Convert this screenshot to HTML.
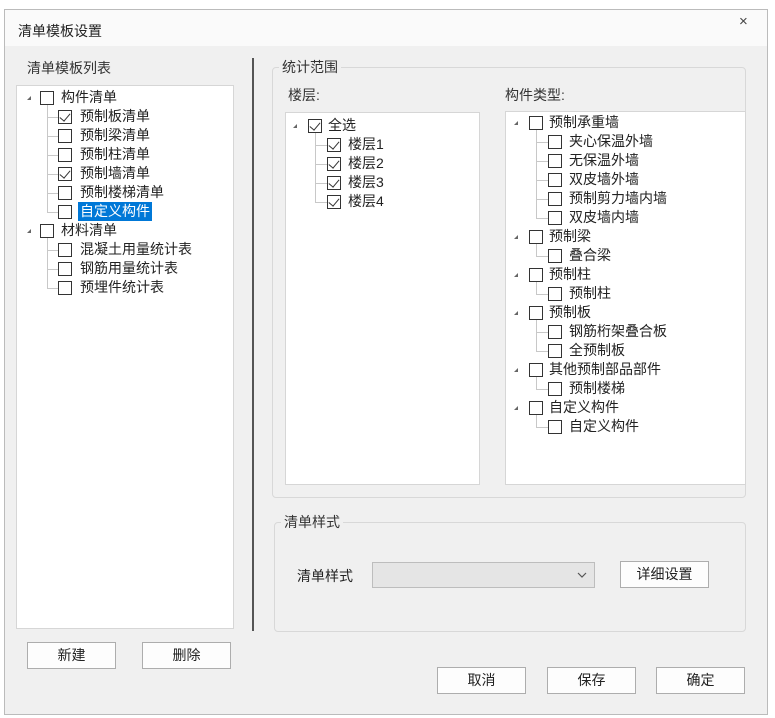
<!DOCTYPE html>
<html><head><meta charset="utf-8"><style>
*{margin:0;padding:0;box-sizing:border-box}
body{width:775px;height:718px;background:#fff;position:relative;overflow:hidden;font-family:"Liberation Sans","Noto Sans CJK SC",sans-serif;font-size:14px;color:#222}
.a{position:absolute}
.win{left:4px;top:9px;width:764px;height:706px;border:1px solid #bbb;background:#f0f0f0}
.tb{left:5px;top:10px;width:762px;height:36px;background:#fafafa}
.box{position:absolute;background:#fff;border:1px solid #d6d6d6}
.grp{position:absolute;border:1px solid #d8d8d8;border-radius:4px}
.lg{position:absolute;background:#f0f0f0;padding:0 3px;color:#333;line-height:16px}
.btn{position:absolute;background:#fdfdfd;border:1px solid #adadad;text-align:center;line-height:25px;color:#222}
.r{position:absolute;height:19px;line-height:19px;white-space:nowrap}
.cb{position:absolute;width:14px;height:14px;border:1px solid #333;background:#fff}
.ck::after{content:"";position:absolute;left:3px;top:0px;width:5px;height:9px;border-right:1.5px solid #333;border-bottom:1.5px solid #333;transform:rotate(40deg)}
.ar{position:absolute;width:0;height:0;border-left:4px solid transparent;border-bottom:4px solid #666}
.vl{position:absolute;width:1px;background:#c8c8c8}
.hl{position:absolute;height:1px;background:#c8c8c8}
</style></head><body>
<div class="a win"></div>
<div class="a tb"></div>
<div class="a" style="left:18px;top:22px;line-height:18px;color:#222">清单模板设置</div>
<div class="a" style="left:739px;top:13px;font-size:15px;color:#444">×</div>

<div class="a" style="left:27px;top:58px;color:#333">清单模板列表</div>
<div class="box" style="left:16px;top:85px;width:218px;height:544px"></div>
<div class="a" style="left:252px;top:58px;width:2px;height:573px;background:#555"></div>

<!-- left tree -->
<div class="ar" style="left:27px;top:96px"></div>
<div class="cb" style="left:40px;top:91px"></div><div class="r" style="left:61px;top:88px">构件清单</div>
<div class="vl" style="left:47px;top:105px;height:108px"></div>
<div class="hl" style="left:47px;top:117px;width:11px"></div>
<div class="hl" style="left:47px;top:136px;width:11px"></div>
<div class="hl" style="left:47px;top:155px;width:11px"></div>
<div class="hl" style="left:47px;top:174px;width:11px"></div>
<div class="hl" style="left:47px;top:193px;width:11px"></div>
<div class="hl" style="left:47px;top:212px;width:11px"></div>
<div class="cb ck" style="left:58px;top:110px"></div><div class="r" style="left:80px;top:107px">预制板清单</div>
<div class="cb" style="left:58px;top:129px"></div><div class="r" style="left:80px;top:126px">预制梁清单</div>
<div class="cb" style="left:58px;top:148px"></div><div class="r" style="left:80px;top:145px">预制柱清单</div>
<div class="cb ck" style="left:58px;top:167px"></div><div class="r" style="left:80px;top:164px">预制墙清单</div>
<div class="cb" style="left:58px;top:186px"></div><div class="r" style="left:80px;top:183px">预制楼梯清单</div>
<div class="cb" style="left:58px;top:205px"></div><div class="r" style="left:78px;top:202px;background:#0078d7;color:#fff;padding:0 2px">自定义构件</div>
<div class="ar" style="left:27px;top:229px"></div>
<div class="cb" style="left:40px;top:224px"></div><div class="r" style="left:61px;top:221px">材料清单</div>
<div class="vl" style="left:47px;top:238px;height:51px"></div>
<div class="hl" style="left:47px;top:250px;width:11px"></div>
<div class="hl" style="left:47px;top:269px;width:11px"></div>
<div class="hl" style="left:47px;top:288px;width:11px"></div>
<div class="cb" style="left:58px;top:243px"></div><div class="r" style="left:80px;top:240px">混凝土用量统计表</div>
<div class="cb" style="left:58px;top:262px"></div><div class="r" style="left:80px;top:259px">钢筋用量统计表</div>
<div class="cb" style="left:58px;top:281px"></div><div class="r" style="left:80px;top:278px">预埋件统计表</div>

<div class="btn" style="left:27px;top:642px;width:89px;height:27px">新建</div>
<div class="btn" style="left:142px;top:642px;width:89px;height:27px">删除</div>

<!-- group 1 -->
<div class="grp" style="left:272px;top:67px;width:474px;height:431px"></div>
<div class="lg" style="left:279px;top:59px">统计范围</div>
<div class="a" style="left:288px;top:85px;color:#333">楼层:</div>
<div class="a" style="left:505px;top:85px;color:#333">构件类型:</div>
<div class="box" style="left:285px;top:112px;width:195px;height:373px"></div>
<div class="box" style="left:505px;top:111px;width:241px;height:374px"></div>

<div class="ar" style="left:293px;top:124px"></div>
<div class="cb ck" style="left:308px;top:119px"></div><div class="r" style="left:328px;top:116px">全选</div>
<div class="vl" style="left:315px;top:133px;height:70px"></div>
<div class="hl" style="left:315px;top:145px;width:12px"></div>
<div class="hl" style="left:315px;top:164px;width:12px"></div>
<div class="hl" style="left:315px;top:183px;width:12px"></div>
<div class="hl" style="left:315px;top:202px;width:12px"></div>
<div class="cb ck" style="left:327px;top:138px"></div><div class="r" style="left:348px;top:135px">楼层1</div>
<div class="cb ck" style="left:327px;top:157px"></div><div class="r" style="left:348px;top:154px">楼层2</div>
<div class="cb ck" style="left:327px;top:176px"></div><div class="r" style="left:348px;top:173px">楼层3</div>
<div class="cb ck" style="left:327px;top:195px"></div><div class="r" style="left:348px;top:192px">楼层4</div>

<!-- type tree -->
<div class="ar" style="left:514px;top:121px"></div>
<div class="cb" style="left:529px;top:116px"></div><div class="r" style="left:549px;top:113px">预制承重墙</div>
<div class="vl" style="left:536px;top:130px;height:89px"></div>
<div class="hl" style="left:536px;top:142px;width:12px"></div>
<div class="hl" style="left:536px;top:161px;width:12px"></div>
<div class="hl" style="left:536px;top:180px;width:12px"></div>
<div class="hl" style="left:536px;top:199px;width:12px"></div>
<div class="hl" style="left:536px;top:218px;width:12px"></div>
<div class="cb" style="left:548px;top:135px"></div><div class="r" style="left:569px;top:132px">夹心保温外墙</div>
<div class="cb" style="left:548px;top:154px"></div><div class="r" style="left:569px;top:151px">无保温外墙</div>
<div class="cb" style="left:548px;top:173px"></div><div class="r" style="left:569px;top:170px">双皮墙外墙</div>
<div class="cb" style="left:548px;top:192px"></div><div class="r" style="left:569px;top:189px">预制剪力墙内墙</div>
<div class="cb" style="left:548px;top:211px"></div><div class="r" style="left:569px;top:208px">双皮墙内墙</div>

<div class="ar" style="left:514px;top:235px"></div>
<div class="cb" style="left:529px;top:230px"></div><div class="r" style="left:549px;top:227px">预制梁</div>
<div class="vl" style="left:536px;top:244px;height:13px"></div><div class="hl" style="left:536px;top:256px;width:12px"></div>
<div class="cb" style="left:548px;top:249px"></div><div class="r" style="left:569px;top:246px">叠合梁</div>

<div class="ar" style="left:514px;top:273px"></div>
<div class="cb" style="left:529px;top:268px"></div><div class="r" style="left:549px;top:265px">预制柱</div>
<div class="vl" style="left:536px;top:282px;height:13px"></div><div class="hl" style="left:536px;top:294px;width:12px"></div>
<div class="cb" style="left:548px;top:287px"></div><div class="r" style="left:569px;top:284px">预制柱</div>

<div class="ar" style="left:514px;top:311px"></div>
<div class="cb" style="left:529px;top:306px"></div><div class="r" style="left:549px;top:303px">预制板</div>
<div class="vl" style="left:536px;top:320px;height:32px"></div>
<div class="hl" style="left:536px;top:332px;width:12px"></div><div class="hl" style="left:536px;top:351px;width:12px"></div>
<div class="cb" style="left:548px;top:325px"></div><div class="r" style="left:569px;top:322px">钢筋桁架叠合板</div>
<div class="cb" style="left:548px;top:344px"></div><div class="r" style="left:569px;top:341px">全预制板</div>

<div class="ar" style="left:514px;top:368px"></div>
<div class="cb" style="left:529px;top:363px"></div><div class="r" style="left:549px;top:360px">其他预制部品部件</div>
<div class="vl" style="left:536px;top:377px;height:13px"></div><div class="hl" style="left:536px;top:389px;width:12px"></div>
<div class="cb" style="left:548px;top:382px"></div><div class="r" style="left:569px;top:379px">预制楼梯</div>

<div class="ar" style="left:514px;top:406px"></div>
<div class="cb" style="left:529px;top:401px"></div><div class="r" style="left:549px;top:398px">自定义构件</div>
<div class="vl" style="left:536px;top:415px;height:13px"></div><div class="hl" style="left:536px;top:427px;width:12px"></div>
<div class="cb" style="left:548px;top:420px"></div><div class="r" style="left:569px;top:417px">自定义构件</div>

<!-- group 2 -->
<div class="grp" style="left:274px;top:522px;width:472px;height:110px"></div>
<div class="lg" style="left:281px;top:514px">清单样式</div>
<div class="a" style="left:297px;top:566px">清单样式</div>
<div class="a" style="left:372px;top:562px;width:223px;height:26px;background:#e5e5e5;border:1px solid #bdbdbd"></div>
<svg class="a" style="left:577px;top:571px" width="10" height="8"><path d="M1 2 L5 6 L9 2" fill="none" stroke="#555" stroke-width="1.2"/></svg>
<div class="btn" style="left:620px;top:561px;width:89px;height:27px">详细设置</div>

<div class="btn" style="left:437px;top:667px;width:89px;height:27px">取消</div>
<div class="btn" style="left:547px;top:667px;width:89px;height:27px">保存</div>
<div class="btn" style="left:656px;top:667px;width:89px;height:27px">确定</div>
</body></html>
